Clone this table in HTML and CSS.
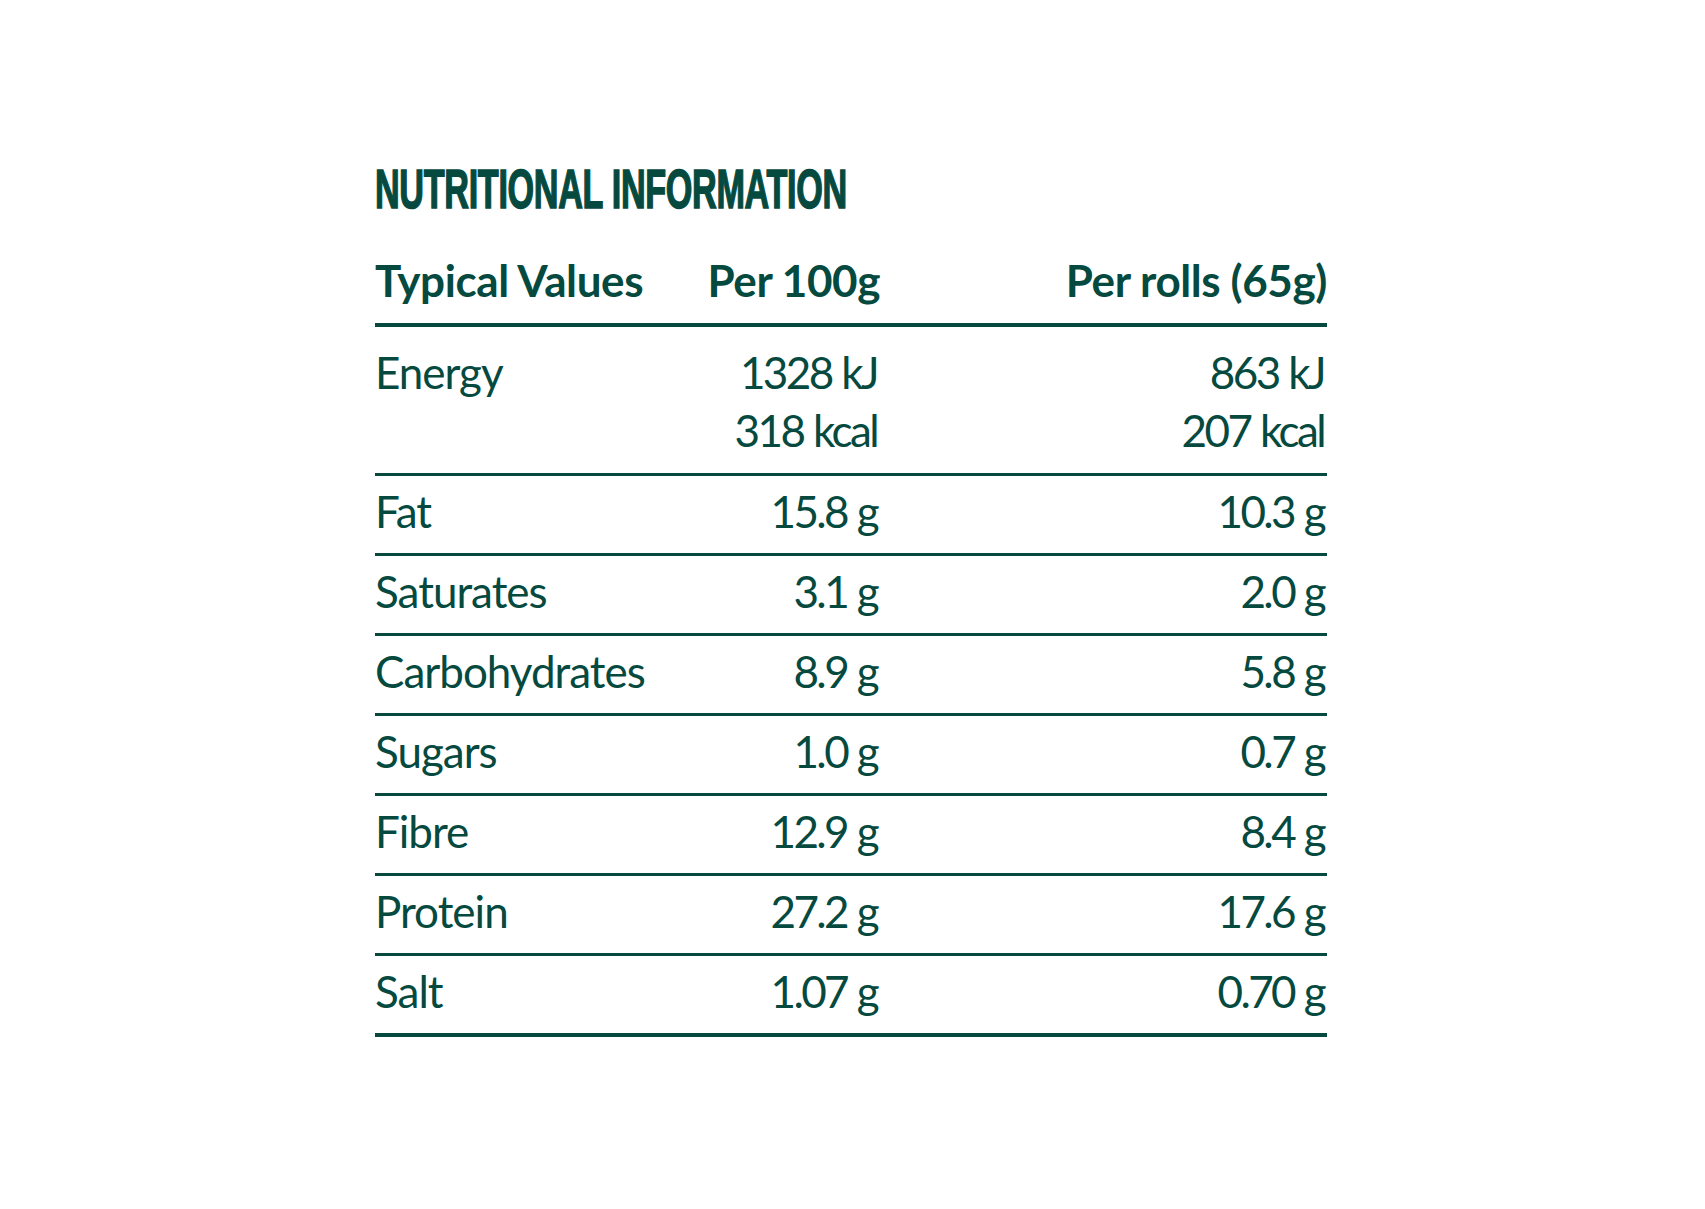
FILE: index.html
```html
<!DOCTYPE html>
<html lang="en">
<head>
<meta charset="utf-8">
<title>Nutritional Information</title>
<link rel="stylesheet" href="styles.css">
</head>
<body>
<main class="panel">
  <h1 class="title"><span class="title-text">NUTRITIONAL INFORMATION</span></h1>
  <div class="table">
    <div class="row head">
      <div class="cell name">Typical Values</div>
      <div class="cell num">Per 100g</div>
      <div class="cell num">Per rolls (65g)</div>
    </div>
    <div class="row first">
      <div class="cell name">Energy</div>
      <div class="cell num">1328 kJ<br>318 kcal</div>
      <div class="cell num">863 kJ<br>207 kcal</div>
    </div>
    <div class="row">
      <div class="cell name">Fat</div>
      <div class="cell num">15.8 g</div>
      <div class="cell num">10.3 g</div>
    </div>
    <div class="row">
      <div class="cell name">Saturates</div>
      <div class="cell num">3.1 g</div>
      <div class="cell num">2.0 g</div>
    </div>
    <div class="row">
      <div class="cell name">Carbohydrates</div>
      <div class="cell num">8.9 g</div>
      <div class="cell num">5.8 g</div>
    </div>
    <div class="row">
      <div class="cell name">Sugars</div>
      <div class="cell num">1.0 g</div>
      <div class="cell num">0.7 g</div>
    </div>
    <div class="row">
      <div class="cell name">Fibre</div>
      <div class="cell num">12.9 g</div>
      <div class="cell num">8.4 g</div>
    </div>
    <div class="row">
      <div class="cell name">Protein</div>
      <div class="cell num">27.2 g</div>
      <div class="cell num">17.6 g</div>
    </div>
    <div class="row last">
      <div class="cell name">Salt</div>
      <div class="cell num">1.07 g</div>
      <div class="cell num">0.70 g</div>
    </div>
  </div>
</main>
</body>
</html>
```
FILE: styles.css
```css
html, body {
  margin: 0;
  padding: 0;
  background: #ffffff;
}

body {
  color: #064a3f;
  font-family: Lato, "Open Sans", "DejaVu Sans", sans-serif;
}

.panel {
  width: 952px;
  padding: 161px 0 0 375px;
}

.title {
  margin: 0 0 34px 0;
  height: 56px;
  font-family: "Liberation Sans", Arial, sans-serif;
  font-weight: 700;
  font-size: 56px;
  line-height: 56px;
  white-space: nowrap;
}

.title-text {
  display: inline-block;
  transform-origin: 0 50%;
  transform: scaleX(0.61);
  letter-spacing: -0.5px;
  -webkit-text-stroke: 1.6px #064a3f;
}

.table {
  display: flex;
  flex-direction: column;
}

.row {
  display: grid;
  grid-template-columns: 260px 245px 1fr;
  font-size: 44px;
  line-height: 58px;
  padding: 6px 0 13px 0;
  border-bottom: 3px solid #064a3f;
  letter-spacing: -1px;
  white-space: nowrap;
}

.row.head {
  font-weight: 700;
  padding: 0 0 14px 0;
  border-bottom-width: 4px;
  letter-spacing: -0.4px;
}

.row.first {
  padding: 16px 0 14px 0;
}

.row.last {
  border-bottom-width: 4px;
}

.cell.num {
  text-align: right;
}

.row:not(.head) .cell.num {
  letter-spacing: -2.6px;
  word-spacing: 1px;
  margin-right: 3px;
}
```
